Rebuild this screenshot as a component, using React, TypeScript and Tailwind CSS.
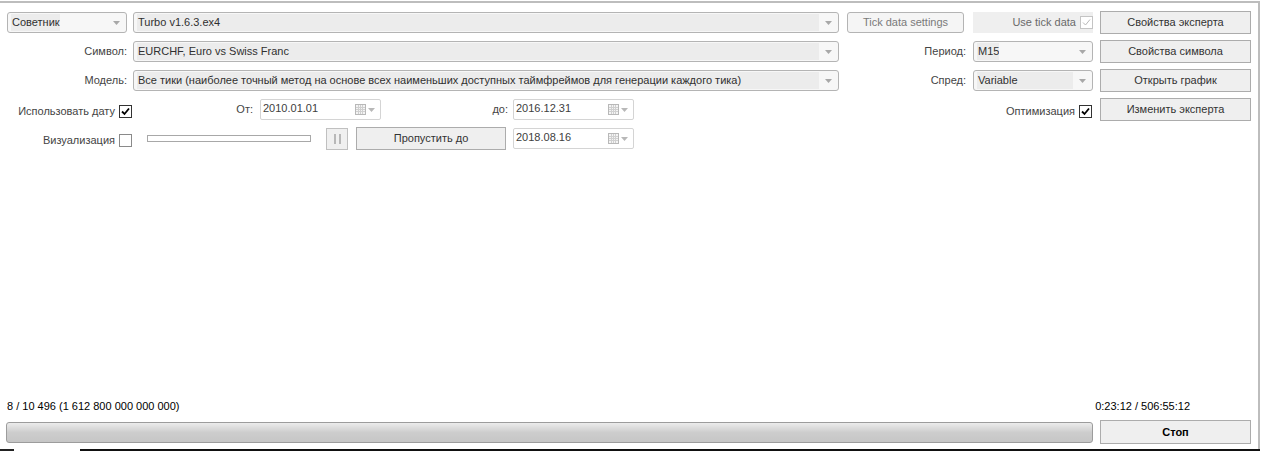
import React from "react";

const Arrow = ({ color = "#a8a8a8" }: { color?: string }) => (
  <svg width="7" height="4" viewBox="0 0 7 4" className="shrink-0">
    <path d="M0 0 L7 0 L3.5 4 Z" fill={color} />
  </svg>
);

const CalIcon = () => (
  <svg width="11" height="11" viewBox="0 0 11 11" className="shrink-0">
    <rect x="0.5" y="0.5" width="10" height="10" fill="#f4f4f4" stroke="#b8b8b8" />
    <path d="M1 3.5H10M1 5.5H10M1 7.5H10M3.5 1V10M5.5 1V10M7.5 1V10" stroke="#d0d0d0" strokeWidth="1" />
  </svg>
);

function Combo({ text, w, inner, className = "" }: { text: string; w: string; inner?: string; className?: string }) {
  return (
    <div className={`${w} h-[21px] shrink-0 rounded-[3px] border border-[#b4b4b4] bg-[#f7f7f7] flex items-center pl-[3px] pr-[6px] ${className}`}>
      <div className={`${inner ?? "w-auto"} h-[17px] bg-[#ececec] flex items-center pl-[1px] text-[#303030] whitespace-nowrap overflow-hidden`}>{text}</div>
      <div className="flex-1" />
      <Arrow />
    </div>
  );
}

function DateField({ text }: { text: string }) {
  return (
    <div className="w-[121px] h-[21px] shrink-0 rounded-[2px] border border-[#d4d4d4] bg-white flex items-center pl-[2px] pr-[5px]">
      <span className="text-[#404040] -mt-[2px]">{text}</span>
      <div className="flex-1" />
      <CalIcon />
      <div className="ml-[2px]">
        <Arrow color="#b8b8b8" />
      </div>
    </div>
  );
}

function Btn({ text, w, h = "h-[23px]", className = "" }: { text: string; w: string; h?: string; className?: string }) {
  return (
    <div className={`${w} ${h} shrink-0 border border-[#acacac] bg-[#efefef] flex items-center justify-center text-[#333] ${className}`}>
      {text}
    </div>
  );
}

function Check({ checked, disabled }: { checked?: boolean; disabled?: boolean }) {
  return (
    <div
      className={`w-[13px] h-[13px] shrink-0 border ${disabled ? "border-[#c4c4c4]" : checked ? "border-[#333]" : "border-[#8a8a8a]"} bg-white flex items-center justify-center`}
    >
      {checked && (
        <svg width="9" height="9" viewBox="0 0 9 9">
          <path d="M1 4.5 L3.5 7 L8 1.5" fill="none" stroke={disabled ? "#b8b8b8" : "#000"} strokeWidth={disabled ? 1 : 1.8} />
        </svg>
      )}
    </div>
  );
}

export default function App() {
  return (
    <div
      className="relative w-[1266px] h-[451px] bg-white overflow-hidden text-[11px] leading-none"
      style={{ fontFamily: '"Liberation Sans", Arial, sans-serif' }}
    >
      <div className="w-[1260px] h-[449px] border-t-2 border-r-2 border-[#bdbdbd] mt-[1px] flex flex-col">
        {/* Row 1 */}
        <div className="flex items-center mt-[8px] pl-[7px]">
          <Combo text="Советник" w="w-[120px]" className="bg-[#f2f2f2]" />
          <Combo text="Turbo v1.6.3.ex4" w="w-[706px]" inner="w-[682px]" className="ml-[6px]" />
          <div className="ml-[8px] w-[117px] h-[21px] rounded-[3px] border border-[#b4b4b4] bg-[#f5f5f5] flex items-center justify-center text-[#7a7a7a]">
            Tick data settings
          </div>
          <div className="ml-[9px] w-[120px] h-[21px] bg-[#efefef] flex items-center justify-end gap-[4px] text-[#6a6a6a]">
            Use tick data
            <Check checked disabled />
          </div>
          <Btn text="Свойства эксперта" w="w-[151px]" className="ml-[7px]" />
        </div>

        {/* Row 2 */}
        <div className="flex items-center mt-[6px] pl-[7px]">
          <div className="w-[120px] text-right text-[#444]">Символ:</div>
          <Combo text="EURCHF, Euro vs Swiss Franc" w="w-[706px]" inner="w-[682px]" className="ml-[6px]" />
          <div className="w-[119px] text-right text-[#444] ml-[8px]">Период:</div>
          <Combo text="M15" w="w-[120px]" className="ml-[7px] bg-[#f2f2f2]" />
          <Btn text="Свойства символа" w="w-[151px]" className="ml-[7px]" />
        </div>

        {/* Row 3 */}
        <div className="flex items-center mt-[6px] pl-[7px]">
          <div className="w-[120px] text-right text-[#444]">Модель:</div>
          <Combo
            text="Все тики (наиболее точный метод на основе всех наименьших доступных таймфреймов для генерации каждого тика)"
            w="w-[706px]"
            inner="w-[682px]"
            className="ml-[6px]"
          />
          <div className="w-[119px] text-right text-[#444] ml-[8px]">Спред:</div>
          <Combo text="Variable" w="w-[120px]" inner="w-[96px]" className="ml-[7px]" />
          <Btn text="Открыть график" w="w-[151px]" className="ml-[7px]" />
        </div>

        {/* Row 4 */}
        <div className="flex items-center mt-[6px]">
          <div className="w-[115px] text-right text-[#444] mt-[4px]">Использовать дату</div>
          <div className="ml-[4px] mt-[4px]">
            <Check checked />
          </div>
          <div className="w-[121px] text-right text-[#444]">От:</div>
          <div className="ml-[7px]">
            <DateField text="2010.01.01" />
          </div>
          <div className="w-[127px] text-right text-[#444]">до:</div>
          <div className="ml-[5px]">
            <DateField text="2016.12.31" />
          </div>
          <div className="flex-1" />
          <div className="text-[#444] mt-[4px]">Оптимизация</div>
          <div className="ml-[4px] mt-[4px]">
            <Check checked />
          </div>
          <Btn text="Изменить эксперта" w="w-[151px]" className="ml-[8px] mr-[7px]" />
        </div>

        {/* Row 5 */}
        <div className="flex items-center mt-[6px]">
          <div className="w-[115px] text-right text-[#444] mt-[4px]">Визуализация</div>
          <div className="ml-[4px] mt-[4px]">
            <Check />
          </div>
          <div className="ml-[15px] w-[164px] h-[7px] border border-[#a8a8a8] bg-white" />
          <div className="ml-[15px] w-[22px] h-[22px] border border-[#c0c0c0] bg-[#f0f0f0] flex items-center justify-center gap-[3px]">
            <div className="w-[2px] h-[10px] bg-[#b8b8b8]" />
            <div className="w-[2px] h-[10px] bg-[#b8b8b8]" />
          </div>
          <Btn text="Пропустить до" w="w-[150px]" h="h-[23px]" className="ml-[8px] bg-[#ececec]" />
          <div className="ml-[7px]">
            <DateField text="2018.08.16" />
          </div>
        </div>

        <div className="flex-1" />

        {/* Bottom */}
        <div className="flex items-end pl-[7px] pr-[68px] text-black">
          <div>8 / 10 496 (1 612 800 000 000 000)</div>
          <div className="flex-1" />
          <div>0:23:12 / 506:55:12</div>
        </div>
        <div className="flex items-center mt-[8px] mb-[6px] pl-[6px]">
          <div className="w-[1087px] h-[21px] rounded-[3px] border border-[#9c9c9c] bg-gradient-to-b from-[#ececec] via-[#cdcdcd] to-[#c6c6c6]" />
          <div className="ml-[7px] w-[151px] h-[24px] border border-[#acacac] bg-[#efefef] flex items-center justify-center font-bold text-black">
            Стоп
          </div>
        </div>
      </div>
      <div className="absolute left-0 top-[449px] w-[14px] h-[2px] bg-[#222]" />
      <div className="absolute left-[80px] top-[449px] w-[1180px] h-[2px] bg-[#111]" />
    </div>
  );
}
